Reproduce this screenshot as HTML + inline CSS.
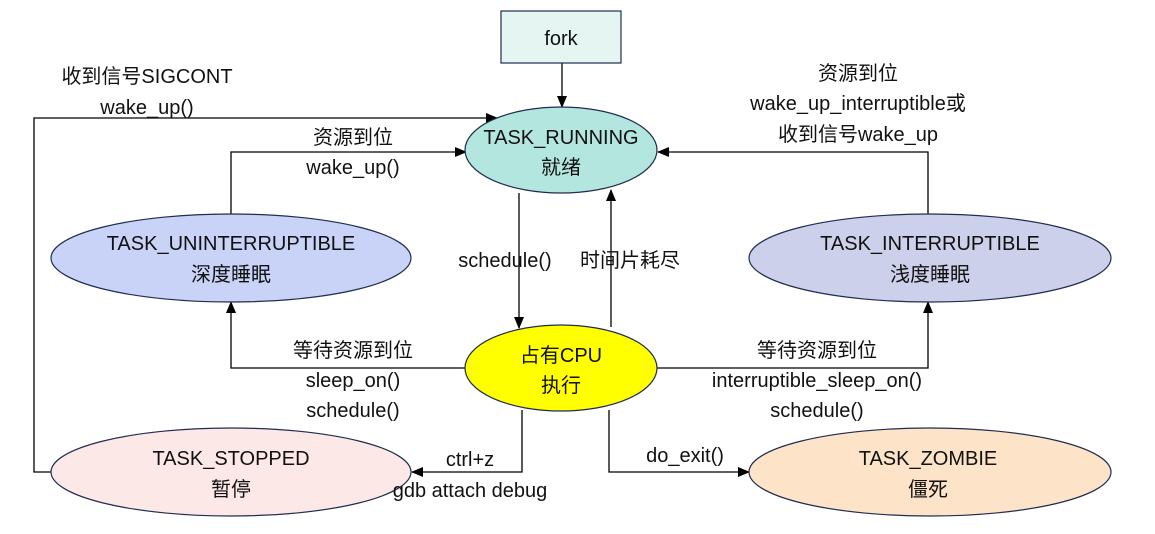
<!DOCTYPE html>
<html><head><meta charset="utf-8"><style>
html,body{margin:0;padding:0;background:#fff;}
svg{display:block;}
text{font-family:"Liberation Sans","Noto Sans CJK SC",sans-serif;font-size:20px;fill:#111;text-anchor:middle;}
</style></head><body>
<svg width="1155" height="534" viewBox="0 0 1155 534" xmlns="http://www.w3.org/2000/svg">
<defs>
<marker id="a" markerWidth="12" markerHeight="10" refX="11" refY="5" orient="auto" markerUnits="userSpaceOnUse">
<path d="M0,0 L12,5 L0,10 z" fill="#000"/>
</marker>
</defs>
<g stroke="#000" stroke-width="1.3" fill="none">
<line x1="562" y1="63" x2="562" y2="107" marker-end="url(#a)"/>
<polyline points="51,472 34,472 34,118 497,118" marker-end="url(#a)"/>
<polyline points="231,214 231,152 466,152" marker-end="url(#a)"/>
<polyline points="928,214 928,152 658,152" marker-end="url(#a)"/>
<line x1="519" y1="193" x2="519" y2="328" marker-end="url(#a)"/>
<line x1="611" y1="327" x2="611" y2="190" marker-end="url(#a)"/>
<polyline points="466,368 231,368 231,302" marker-end="url(#a)"/>
<polyline points="657,368 928,368 928,302" marker-end="url(#a)"/>
<polyline points="522,410 522,472 412,472" marker-end="url(#a)"/>
<polyline points="609,410 609,472 749,472" marker-end="url(#a)"/>
</g>
<g stroke="#1f2d4f" stroke-width="1.2">
<rect x="501" y="11" width="120" height="52" fill="#e4f5f2"/>
<ellipse cx="561" cy="150" rx="96" ry="43" fill="#b3e6df"/>
<ellipse cx="231" cy="258" rx="180" ry="44" fill="#c9d3f7"/>
<ellipse cx="930" cy="258" rx="181" ry="44" fill="#cdd0eb"/>
<ellipse cx="561" cy="368" rx="96" ry="43" fill="#ffff00"/>
<ellipse cx="231" cy="472" rx="180" ry="44" fill="#fde8e8"/>
<ellipse cx="930" cy="472" rx="181" ry="44" fill="#fde4c8"/>
</g>
<text x="561" y="45">fork</text>
<text x="561" y="144">TASK_RUNNING</text>
<text x="561" y="174">就绪</text>
<text x="231" y="250">TASK_UNINTERRUPTIBLE</text>
<text x="231" y="281">深度睡眠</text>
<text x="930" y="250">TASK_INTERRUPTIBLE</text>
<text x="930" y="281">浅度睡眠</text>
<text x="561" y="362">占有CPU</text>
<text x="561" y="392">执行</text>
<text x="231" y="465">TASK_STOPPED</text>
<text x="231" y="496">暂停</text>
<text x="928" y="465">TASK_ZOMBIE</text>
<text x="928" y="496">僵死</text>

<text x="147" y="83">收到信号SIGCONT</text>
<text x="147" y="114">wake_up()</text>
<text x="353" y="144">资源到位</text>
<text x="353" y="174">wake_up()</text>
<text x="858" y="80">资源到位</text>
<text x="858" y="110">wake_up_interruptible或</text>
<text x="858" y="141">收到信号wake_up</text>
<text x="505" y="267">schedule()</text>
<text x="630" y="267">时间片耗尽</text>
<text x="353" y="357">等待资源到位</text>
<text x="353" y="387">sleep_on()</text>
<text x="353" y="417">schedule()</text>
<text x="817" y="357">等待资源到位</text>
<text x="817" y="387">interruptible_sleep_on()</text>
<text x="817" y="417">schedule()</text>
<text x="470" y="466">ctrl+z</text>
<text x="470" y="497">gdb attach debug</text>
<text x="685" y="462">do_exit()</text>
</svg>
</body></html>
